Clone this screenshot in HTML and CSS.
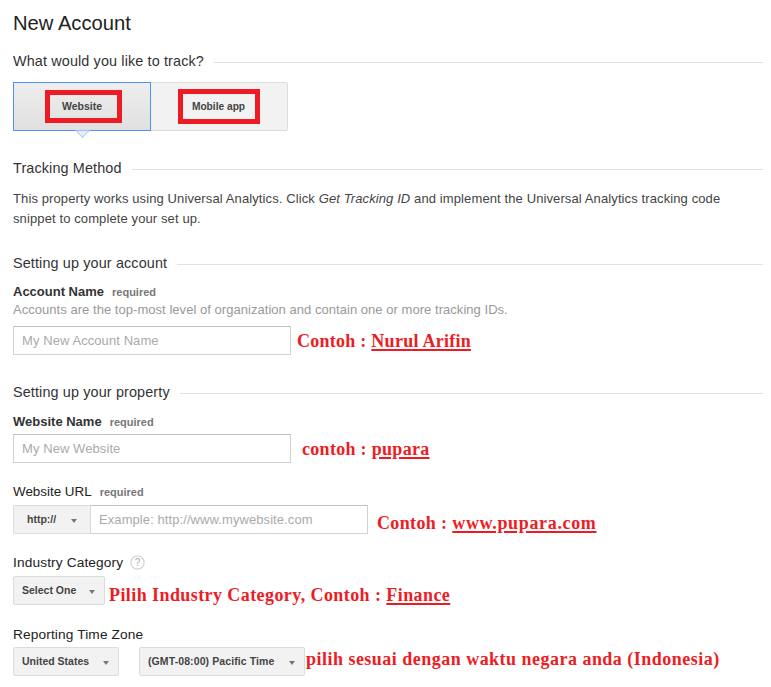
FILE: index.html
```html
<!DOCTYPE html>
<html lang="en">
<head>
<meta charset="utf-8">
<title>New Account</title>
<link rel="stylesheet" href="styles.css">
</head>
<body>
<main class="page">
  <h1 class="title">New Account</h1>

  <h2 class="section first"><span>What would you like to track?</span></h2>
  <div class="tabs">
    <div class="tab selected"><span class="mark">Website</span></div>
    <div class="tab other"><span class="mark wide">Mobile app</span></div>
  </div>

  <h2 class="section tracking"><span>Tracking Method</span></h2>
  <p class="intro">This property works using Universal Analytics. Click <em>Get Tracking ID</em> and implement the Universal Analytics tracking code snippet to complete your set up.</p>

  <h2 class="section account"><span>Setting up your account</span></h2>
  <div class="label l-account"><b>Account Name</b><small>required</small></div>
  <div class="help">Accounts are the top-most level of organization and contain one or more tracking IDs.</div>
  <div class="row r-account">
    <div class="input">My New Account Name</div>
    <div class="note n1">Contoh : <u>Nurul Arifin</u></div>
  </div>

  <h2 class="section property"><span>Setting up your property</span></h2>
  <div class="label l-site"><b>Website Name</b><small>required</small></div>
  <div class="row r-site">
    <div class="input">My New Website</div>
    <div class="note n2">contoh : <u>pupara</u></div>
  </div>

  <div class="label l-url"><b class="plain">Website URL</b><small>required</small></div>
  <div class="row r-url">
    <div class="select joined"><span>http://</span><i class="caret"></i></div>
    <div class="input url">Example: http://www.mywebsite.com</div>
    <div class="note n3">Contoh : <u>www.pupara.com</u></div>
  </div>

  <div class="label l-ind"><b class="plain">Industry Category</b>
    <svg class="help-icon" width="15" height="15" viewBox="0 0 15 15" aria-hidden="true"><circle cx="7.5" cy="7.5" r="6.6" fill="#fff" stroke="#d4d4d4" stroke-width="1.3"/><text x="7.5" y="11" text-anchor="middle" class="q">?</text></svg>
  </div>
  <div class="row r-ind">
    <div class="select s-ind"><span>Select One</span><i class="caret"></i></div>
    <div class="note n4">Pilih Industry Category, Contoh : <u>Finance</u></div>
  </div>

  <div class="label l-time"><b class="plain">Reporting Time Zone</b></div>
  <div class="row r-time">
    <div class="select s-country"><span>United States</span><i class="caret"></i></div>
    <div class="select s-zone"><span>(GMT-08:00) Pacific Time</span><i class="caret"></i></div>
    <div class="note n5">pilih sesuai dengan waktu negara anda (Indonesia)</div>
  </div>
</main>
</body>
</html>
```

FILE: styles.css
```css
* { box-sizing: border-box; }
html, body { margin: 0; background: #fff; }
body { font-family: "Liberation Sans", Arial, sans-serif; color: #333; height: 687px; overflow: hidden; }
.page { padding: 0 8px 0 13px; }

.title { margin: 0; padding-top: 11px; font-size: 20.2px; line-height: 24px; font-weight: 400; color: #222; }

.section { display: flex; align-items: center; margin: 0; font-size: 14.4px; line-height: 20px; letter-spacing: .13px; font-weight: 400; color: #333; }
.section::after { content: ""; flex: 1; height: 1px; margin: 2px 0 0 10px; background: #e2e2e2; }
.section.first { margin-top: 16px; }
.section.tracking { margin-top: 27px; }
.section.account { margin-top: 24px; }
.section.property { margin-top: 27px; }

.tabs { display: flex; width: 275px; height: 49px; margin-top: 11px; }
.tab { position: relative; display: flex; align-items: center; justify-content: center; height: 49px; font-size: 10.5px; font-weight: 700; color: #444; }
.tab.selected { width: 138px; background: linear-gradient(#eeeeee, #e0e0e0); border: 1px solid #4d90fe; }
.tab.selected::after { content: ""; position: absolute; left: 63px; bottom: -6px; width: 10px; height: 10px; background: #e4ecfa; border: solid #a9c6f7; border-width: 0 1px 1px 0; transform: rotate(45deg); clip-path: polygon(100% 0, 100% 100%, 0 100%); }
.tab.other { width: 137px; background: #f2f2f2; border: 1px solid #dcdcdc; border-left: 0; border-radius: 0 2px 2px 0; }
.mark { display: block; width: 77px; height: 33px; padding-right: 3px; border: 5px solid #ed1c24; line-height: 23px; text-align: center; margin-left: 3px; }
.mark.wide { width: 82px; height: 35px; padding-right: 0; line-height: 25px; margin-left: -1px; font-size: 10.2px; }

.intro { max-width: 715px; margin: 11px 0 0; font-size: 13px; line-height: 20px; letter-spacing: .11px; color: #444; }

.label { display: flex; align-items: center; height: 16px; font-size: 13px; color: #333; }
.label b { font-weight: 700; font-size: 13px; color: #333; }
.label b.plain { font-weight: 400; font-size: 13.7px; letter-spacing: .13px; color: #222; }
.l-url b.plain { font-size: 13.4px; letter-spacing: 0; }
.label small { margin-left: 8px; margin-top: 1px; font-size: 11px; font-weight: 700; color: #777; }
.l-account { margin-top: 10px; }
.l-site { margin-top: 11px; }
.l-url { margin-top: 20px; }
.l-ind { margin-top: 20px; }
.l-time { margin-top: 21px; }

.help { height: 18px; line-height: 18px; margin-top: 2px; font-size: 13px; letter-spacing: .04px; color: #999; }

.row { display: flex; align-items: center; height: 29px; }
.r-account { margin-top: 7px; }
.r-site { margin-top: 5px; }
.r-url { margin-top: 6px; }
.r-ind { margin-top: 6px; }
.r-time { margin-top: 5px; }

.input { width: 278px; height: 29px; padding-left: 8px; line-height: 28px; font-size: 13px; letter-spacing: .08px; color: #aaa; background: #fff; border: 1px solid #d2d2d2; border-top-color: #c0c0c0; }
.input.url { border-left-color: #d9d9d9; }

.select { display: flex; align-items: center; justify-content: space-between; height: 29px; padding: 0 9px 0 8px; font-size: 10.5px; font-weight: 700; color: #444; background: #f2f2f2; border: 1px solid #dcdcdc; border-radius: 2px; }
.select span { margin-top: -2px; }
.select.joined { width: 77px; padding: 0 13px 0 13px; border-right: 0; border-radius: 2px 0 0 2px; }
.caret { width: 0; height: 0; margin-top: 2px; border-left: 3.5px solid transparent; border-right: 3.5px solid transparent; border-top: 4px solid #777; }
.s-ind { width: 92px; }
.s-country { width: 106px; }
.s-zone { width: 166px; margin-left: 20px; letter-spacing: .1px; }

.help-icon { margin-left: 7px; margin-top: 1px; }
.q { font: 10px "Liberation Sans", sans-serif; fill: #aaa; }

.note { font-family: "Liberation Serif", "Times New Roman", serif; font-size: 18px; font-weight: 700; color: #ed1c24; letter-spacing: .4px; white-space: nowrap; }
.note u { text-decoration-thickness: 2px; text-underline-offset: 2px; }
.n1 { margin: 2px 0 0 6px; letter-spacing: .26px; }
.n2 { margin: 2px 0 0 11px; letter-spacing: .3px; }
.n3 { margin: 8px 0 0 9px; letter-spacing: .36px; }
.n3 u { letter-spacing: .66px; }
.n4 { margin: 10px 0 0 4px; letter-spacing: .42px; }
.n5 { margin: 0 0 4px 1px; letter-spacing: .48px; }
```
